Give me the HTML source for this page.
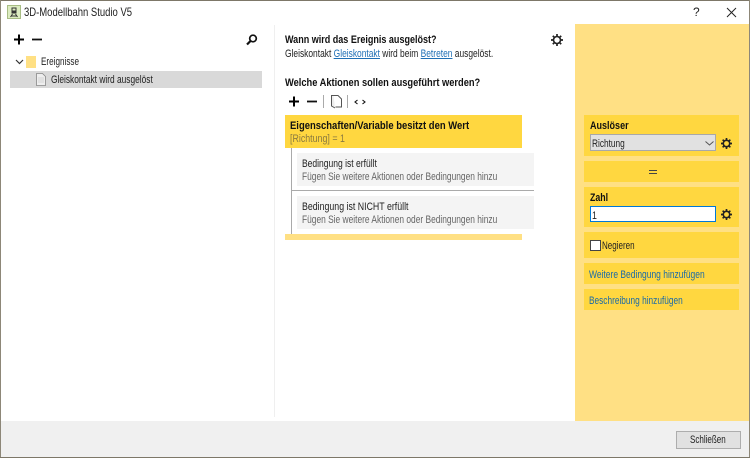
<!DOCTYPE html>
<html><head><meta charset="utf-8">
<style>
html,body{margin:0;padding:0;background:#fff}
#w{position:relative;width:750px;height:458px;overflow:hidden;background:#fff;font-family:"Liberation Sans",sans-serif;font-size:11px;color:#222;filter:blur(.25px)}
.a{position:absolute}
.t{position:absolute;white-space:nowrap;line-height:12px;transform-origin:0 50%}
.b{font-weight:bold;color:#111}
.g{color:#666}
.l{color:#1f6fb5;text-decoration:underline}
.k{color:#1a6aa8}
svg{position:absolute;overflow:visible}
</style></head><body><div id="w">
<div class="a" style="left:0;top:0;width:750px;height:1px;background:#7d7768"></div>
<div class="a" style="left:0;top:0;width:1px;height:458px;background:#8d8778"></div>
<div class="a" style="left:749px;top:0;width:1px;height:458px;background:#8d8778"></div>
<div class="a" style="left:0;top:457px;width:750px;height:1px;background:#7d7768"></div>

<svg style="left:7px;top:5px" width="14" height="14" viewBox="0 0 14 14"><rect x=".5" y=".5" width="13" height="13" fill="#dcecc0" stroke="#a8bd84"/><path d="M4.500 2.500h5v6h-5z" fill="#333"/><rect x="5.500" y="3.500" width="3" height="2" fill="#dcecc0"/><path d="M3.500 12l2-3M10.500 12l-2-3M4 11h6" stroke="#333" fill="none"/></svg>
<div class="t" style="left:24px;top:6px;font-size:12px;transform:scaleX(.79)">3D-Modellbahn Studio V5</div>
<div class="t" style="left:693px;top:6px;font-size:12px">?</div>
<svg style="left:726px;top:7px" width="11" height="11" viewBox="0 0 11 11"><path d="M1 1l9 9M10 1l-9 9" stroke="#222" stroke-width="1" fill="none"/></svg>

<svg style="left:14px;top:34px" width="30" height="12" viewBox="0 0 30 12"><path d="M0 5.500h10M5 .5v10" stroke="#000" stroke-width="2" fill="none"/><path d="M18 5.500h10" stroke="#111" stroke-width="1.800" fill="none"/></svg>
<svg style="left:246px;top:34px" width="12" height="12" viewBox="0 0 12 12"><circle cx="7" cy="4.500" r="3.300" stroke="#111" stroke-width="1.700" fill="none"/><path d="M4.500 7L1 10.500" stroke="#111" stroke-width="2.200" fill="none"/></svg>

<svg style="left:15px;top:59px" width="9" height="6" viewBox="0 0 9 6"><path d="M1 1l3.500 3.500L8 1" stroke="#333" stroke-width="1.200" fill="none"/></svg>
<div class="a" style="left:26px;top:56px;width:10px;height:12px;background:#ffe084"></div>
<div class="t" style="left:41px;top:56px;transform:scaleX(.74)">Ereignisse</div>
<div class="a" style="left:10px;top:71px;width:252px;height:17px;background:#d9d9d9"></div>
<svg style="left:36px;top:73px" width="10" height="13" viewBox="0 0 10 13"><path d="M.5.5h6l3 3v9H.5z" fill="#eee" stroke="#888" stroke-width=".8"/><path d="M2 5h6M2 7h6M2 9h6" stroke="#ccc" stroke-width=".7"/></svg>
<div class="t" style="left:51px;top:74px;transform:scaleX(.76)">Gleiskontakt wird ausgelöst</div>

<div class="a" style="left:274px;top:25px;width:1px;height:392px;background:#efefef"></div>

<div class="t b" style="left:285px;top:34px;transform:scaleX(.82)">Wann wird das Ereignis ausgelöst?</div>
<div class="t" style="left:285px;top:48px;transform:scaleX(.765)">Gleiskontakt <span class="l">Gleiskontakt</span> wird beim <span class="l">Betreten</span> ausgelöst.</div>
<svg style="left:551px;top:34px" width="12" height="12" viewBox="0 0 12 12"><circle cx="6" cy="6" r="3.500" stroke="#222" stroke-width="1.600" fill="none"/><path d="M6 0v2.500M6 9.500V12M0 6h2.500M9.500 6H12M1.800 1.800l1.800 1.800M8.400 8.400l1.800 1.800M1.800 10.200l1.800-1.800M8.400 3.600l1.800-1.800" stroke="#222" stroke-width="1.700"/></svg>

<div class="t b" style="left:285px;top:77px;transform:scaleX(.845)">Welche Aktionen sollen ausgeführt werden?</div>
<svg style="left:289px;top:95px" width="90" height="14" viewBox="0 0 90 14"><path d="M0 6.500h10M5 1.500v10" stroke="#000" stroke-width="2" fill="none"/><path d="M18 6.500h10" stroke="#111" stroke-width="1.800" fill="none"/><path d="M34.500 0v13M58.500 0v13" stroke="#aaa" stroke-width="1"/><path d="M44.500 .5h4.500l3.500 3.500v8h-6" fill="#fff" stroke="#555"/><path d="M44.500 .5h-2v10.500l3.500 2" fill="#eee" stroke="#555"/><path d="M68.500 5l-2.500 2 2.500 2M73.500 5l2.500 2-2.500 2" stroke="#111" stroke-width="1.100" fill="none"/></svg>

<div class="a" style="left:285px;top:115px;width:237px;height:33px;background:#ffd740"></div>
<div class="t b" style="left:290px;top:120px;transform:scaleX(.86)">Eigenschaften/Variable besitzt den Wert</div>
<div class="t" style="left:290px;top:133px;color:#8a7a40;transform:scaleX(.805)">[Richtung] = 1</div>
<div class="a" style="left:291px;top:148px;width:1px;height:86px;background:#aaa"></div>
<div class="a" style="left:297px;top:153px;width:237px;height:33px;background:#f4f4f4"></div>
<div class="t" style="left:302px;top:158px;transform:scaleX(.775)">Bedingung ist erfüllt</div>
<div class="t g" style="left:302px;top:171px;transform:scaleX(.762)">Fügen Sie weitere Aktionen oder Bedingungen hinzu</div>
<div class="a" style="left:291px;top:190px;width:243px;height:1px;background:#aaa"></div>
<div class="a" style="left:297px;top:196px;width:237px;height:33px;background:#f4f4f4"></div>
<div class="t" style="left:302px;top:201px;transform:scaleX(.8)">Bedingung ist NICHT erfüllt</div>
<div class="t g" style="left:302px;top:214px;transform:scaleX(.762)">Fügen Sie weitere Aktionen oder Bedingungen hinzu</div>
<div class="a" style="left:285px;top:234px;width:237px;height:6px;background:#ffe084"></div>

<div class="a" style="left:575px;top:24px;width:174px;height:397px;background:#ffe084"></div>
<div class="a" style="left:584px;top:115px;width:155px;height:41px;background:#ffd740"></div>
<div class="t b" style="left:590px;top:120px;transform:scaleX(.82)">Auslöser</div>
<div class="a" style="left:590px;top:134px;width:124px;height:15px;background:#e1e1e1;border:1px solid #a8a8a8"></div>
<div class="t" style="left:592px;top:138px;transform:scaleX(.755)">Richtung</div>
<svg style="left:705px;top:141px" width="9" height="5" viewBox="0 0 9 5"><path d="M.5.500l4 3.500 4-3.500" stroke="#555" fill="none"/></svg>
<svg style="left:721px;top:138px" width="11" height="11" viewBox="0 0 12 12"><circle cx="6" cy="6" r="3.500" stroke="#222" stroke-width="1.700" fill="none"/><path d="M6 0v2.500M6 9.500V12M0 6h2.500M9.500 6H12M1.800 1.800l1.800 1.800M8.400 8.400l1.800 1.800M1.800 10.200l1.800-1.800M8.400 3.600l1.800-1.800" stroke="#222" stroke-width="1.800"/></svg>
<div class="a" style="left:584px;top:161px;width:155px;height:21px;background:#ffd740"></div>
<div class="a" style="left:649px;top:170px;width:8px;height:1px;background:#444"></div>
<div class="a" style="left:649px;top:173px;width:8px;height:1px;background:#444"></div>
<div class="a" style="left:584px;top:187px;width:155px;height:40px;background:#ffd740"></div>
<div class="t b" style="left:590px;top:192px;transform:scaleX(.8)">Zahl</div>
<div class="a" style="left:590px;top:206px;width:124px;height:14px;background:#fff;border:1px solid #0078d7"></div>
<div class="t" style="left:592px;top:210px;transform:scaleX(.8)">1</div>
<svg style="left:721px;top:209px" width="11" height="11" viewBox="0 0 12 12"><circle cx="6" cy="6" r="3.500" stroke="#222" stroke-width="1.700" fill="none"/><path d="M6 0v2.500M6 9.500V12M0 6h2.500M9.500 6H12M1.800 1.800l1.800 1.800M8.400 8.400l1.800 1.800M1.800 10.200l1.800-1.800M8.400 3.600l1.800-1.800" stroke="#222" stroke-width="1.800"/></svg>
<div class="a" style="left:584px;top:232px;width:155px;height:26px;background:#ffd740"></div>
<div class="a" style="left:590px;top:240px;width:9px;height:9px;background:#fff;border:1px solid #444"></div>
<div class="t" style="left:602px;top:240px;transform:scaleX(.73)">Negieren</div>
<div class="a" style="left:584px;top:263px;width:155px;height:21px;background:#ffd740"></div>
<div class="t k" style="left:589px;top:269px;transform:scaleX(.77)">Weitere Bedingung hinzufügen</div>
<div class="a" style="left:584px;top:289px;width:155px;height:21px;background:#ffd740"></div>
<div class="t k" style="left:589px;top:295px;transform:scaleX(.755)">Beschreibung hinzufügen</div>

<div class="a" style="left:1px;top:421px;width:748px;height:36px;background:#f0f0f0"></div>
<div class="a" style="left:676px;top:431px;width:63px;height:16px;background:#e1e1e1;border:1px solid #adadad"></div>
<div class="t" style="left:690px;top:434px;transform:scaleX(.73)">Schließen</div>
</div></body></html>
